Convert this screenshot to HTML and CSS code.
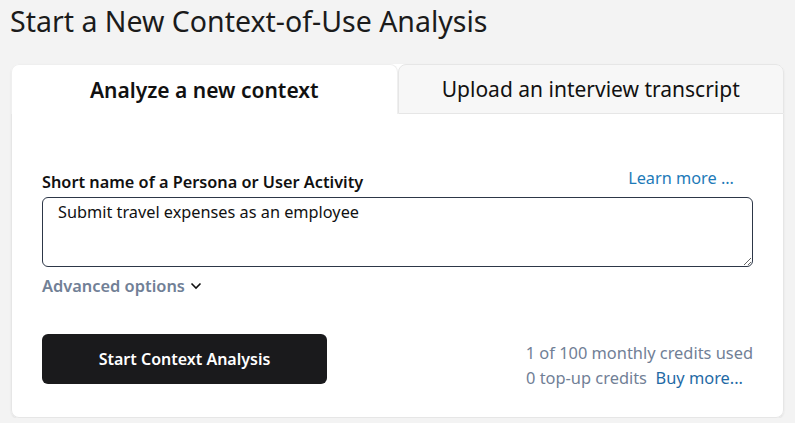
FILE: index.html
```html
<!DOCTYPE html>
<html lang="en">

<head>
  <meta charset="UTF-8">
  <meta name="viewport" content="width=device-width, initial-scale=1.0">
  <title>Start a New Context-of-Use Analysis</title>
  <link rel="stylesheet" href="styles.css">
</head>

<body>
  <h1 class="page-title">Start a New Context-of-Use Analysis</h1>

  <div class="card">
    <div class="tabs">
      <div class="tab active">Analyze a new context</div>
      <div class="tab">Upload an interview transcript</div>
    </div>

    <div class="panel">
      <div class="field-head">
        <label for="shortName">Short name of a Persona or User Activity</label>
        <a href="#" class="learn-more">Learn more ...</a>
      </div>
      <textarea id="shortName" class="name-input">Submit travel expenses as an employee</textarea>

      <button class="advanced-toggle">
        Advanced options
        <svg width="12" height="8" viewBox="0 0 12 8"><path d="M1.5 1.5 L6 6 L10.5 1.5" fill="none" stroke="#111" stroke-width="1.6" /></svg>
      </button>

      <div class="actions">
        <button class="primary">Start Context Analysis</button>
        <div class="credits">
          <div>1 of 100 monthly credits used</div>
          <div>0 top-up credits&nbsp;&nbsp;<a href="#" class="buy-more">Buy more...</a></div>
        </div>
      </div>
    </div>
  </div>
</body>

</html>
```

FILE: styles.css
```css
body {
  margin: 0;
  padding: 0 11px;
  font-family: "Noto Sans", Arial, sans-serif;
  background-color: #f3f3f3;
  color: #111;
}

.page-title {
  margin: 0;
  padding: 2px 0 0 0;
  height: 62px;
  margin-left: -1px;
  font-size: 28.5px;
  font-weight: 400;
  line-height: 38px;
  color: #1b1b1b;
}

.card {
  background: white;
  border-radius: 8px;
  box-shadow: 0 1px 2px rgba(0, 0, 0, 0.08);
}

.tabs {
  display: flex;
  height: 50px;
}

.tab {
  flex: 1;
  display: flex;
  align-items: center;
  justify-content: center;
  font-size: 21px;
  border: 1px solid #e6e6e6;
  border-radius: 8px 8px 0 0;
  background: #f7f7f7;
  color: #111;
}

.tab.active {
  background: white;
  border-color: #efefef;
  border-bottom: none;
  font-weight: 600;
}

.panel {
  padding: 56px 30px 33px 30px;
  border: 1px solid #e6e6e6;
  border-top: none;
  border-radius: 0 0 8px 8px;
}

.field-head {
  display: flex;
  justify-content: space-between;
  align-items: flex-end;
  padding-bottom: 3px;
}

.field-head label {
  font-size: 16.3px;
  font-weight: 600;
  line-height: 24px;
}

.learn-more {
  margin-right: 19px;
  font-size: 16.3px;
  line-height: 24px;
  color: #1d7ab8;
  text-decoration: none;
  position: relative;
  top: -4px;
}

.name-input {
  display: block;
  box-sizing: border-box;
  width: 100%;
  height: 70px;
  margin: 0;
  padding: 3px 15px;
  font-family: inherit;
  font-size: 16.3px;
  line-height: 22px;
  color: #111;
  border: 1px solid #2d3748;
  border-radius: 6px;
  resize: vertical;
}

.advanced-toggle {
  display: flex;
  align-items: center;
  gap: 5px;
  margin-top: 7px;
  padding: 0;
  border: none;
  background: none;
  font-family: inherit;
  font-size: 16.4px;
  font-weight: 600;
  line-height: 24px;
  color: #718096;
  cursor: pointer;
}

.actions {
  display: flex;
  justify-content: space-between;
  align-items: flex-end;
  margin-top: 36px;
}

button.primary {
  width: 285px;
  height: 50px;
  padding: 0;
  font-family: inherit;
  font-size: 16px;
  font-weight: 600;
  color: white;
  background-color: #1a1a1c;
  border: none;
  border-radius: 6px;
  cursor: pointer;
}

.credits {
  text-align: right;
  font-size: 16.4px;
  line-height: 25px;
  color: #718096;
  margin-bottom: -6px;
}

.buy-more {
  color: #1f6aa5;
  text-decoration: none;
  margin-right: 10px;
}
```
